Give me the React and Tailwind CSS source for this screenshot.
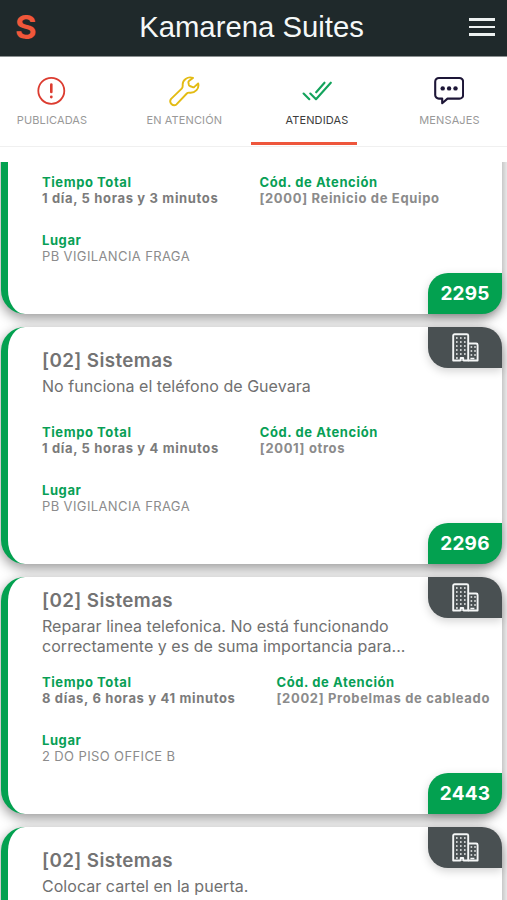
import React, { useState } from 'react';

const tabs = [
  { id: 'publicadas', label: 'PUBLICADAS', icon: AlertIcon },
  { id: 'atencion', label: 'EN ATENCIÓN', icon: WrenchIcon },
  { id: 'atendidas', label: 'ATENDIDAS', icon: DoubleCheckIcon },
  { id: 'mensajes', label: 'MENSAJES', icon: MessageIcon },
];

const tickets = [
  {
    id: 2295,
    time: '1 día, 5 horas y 3 minutos',
    code: '[2000] Reinicio de Equipo',
    place: 'PB VIGILANCIA FRAGA',
  },
  {
    id: 2296,
    title: '[02] Sistemas',
    description: 'No funciona el teléfono de Guevara',
    time: '1 día, 5 horas y 4 minutos',
    code: '[2001] otros',
    place: 'PB VIGILANCIA FRAGA',
  },
  {
    id: 2443,
    title: '[02] Sistemas',
    description: 'Reparar linea telefonica. No está funcionando correctamente y es de suma importancia para...',
    time: '8 días, 6 horas y 41 minutos',
    code: '[2002] Probelmas de cableado',
    place: '2 DO PISO OFFICE B',
  },
  {
    title: '[02] Sistemas',
    description: 'Colocar cartel en la puerta.',
  },
];

function AlertIcon() {
  return (
    <svg width="30" height="30" viewBox="0 0 30 30" fill="none" stroke="#dc3c30" strokeWidth="1.8">
      <circle cx="14.3" cy="14.8" r="13" />
      <path d="M14.3 8.6v7.4" strokeWidth="2.6" strokeLinecap="round" />
      <circle cx="14.3" cy="21" r="1.4" fill="#dc3c30" stroke="none" />
    </svg>
  );
}

function WrenchIcon() {
  return (
    <svg width="31" height="31" viewBox="0 0 31 31" className="-mb-px" fill="none" stroke="#e3bb13" strokeWidth="1.9" strokeLinecap="round" strokeLinejoin="round">
      <path d="M24 1.9C18.5 0 13.2 4 13.7 9.4C13.8 11 13.6 11.8 12.7 12.7L2.1 22.9A3.9 3.9 0 0 0 7.5 28.4L17.8 17.5C18.6 16.7 19.4 16.5 20.7 16.7C26.4 17.2 30.4 12.6 29.2 7.5L25.3 10.9A1.6 1.6 0 0 1 23.7 11.1L20.8 10A1.6 1.6 0 0 1 19.9 9L19.4 6.5Q19.3 5.700 19.9 5.1Z" />
    </svg>
  );
}

function DoubleCheckIcon() {
  return (
    <svg width="30" height="30" viewBox="0 0 30 30" fill="none" stroke="#13a35c" strokeWidth="2.1" strokeLinecap="round" strokeLinejoin="round">
      <path d="M1.6 17.500l5.700 5.700M8.300 17.500l5.700 5.700L28.800 6.700M14.200 16.300L22.500 6.700" />
    </svg>
  );
}

function MessageIcon() {
  return (
    <svg width="30" height="30" viewBox="0 0 30 30" fill="none" stroke="#1d1637" strokeWidth="2.1" strokeLinejoin="round">
      <path d="M4.9 2h20.500a3.700 3.700 0 0 1 3.700 3.700v13.200a3.700 3.700 0 0 1-3.700 3.700H13.500L8.200 27.200v-4.600H4.900A3.700 3.700 0 0 1 1.200 18.900V5.700A3.700 3.700 0 0 1 4.900 2z" />
      <g fill="#1d1637" stroke="none">
        <circle cx="8.700" cy="12.400" r="2.200" />
        <circle cx="15.100" cy="12.400" r="2.200" />
        <circle cx="21.500" cy="12.400" r="2.200" />
      </g>
    </svg>
  );
}

function BuildingIcon() {
  return (
    <svg width="27" height="29" viewBox="0 0 27 29" fill="none" stroke="#f4f6f6" strokeWidth="1.9" strokeLinejoin="round">
      <path d="M8.700 27.500H1.200V2.600a1.400 1.400 0 0 1 1.400-1.400h12.200a1.400 1.400 0 0 1 1.400 1.400v24.900h-5" />
      <path d="M16.200 10.500h8a1.400 1.400 0 0 1 1.400 1.400v15.600h-9.400M8.700 28v-3h2.500v3" />
      <path d="M4 5h11M4 9h11M4 13h11M4 17h11M4 21h11" strokeWidth="1.6" strokeDasharray="1.6 2.4" />
      <path d="M18.600 14h6M18.600 18h6M18.600 22h6" strokeWidth="1.6" strokeDasharray="1.6 2" />
      <path d="M4 25h1.800M18.400 25.500h4" strokeWidth="1.5" />
    </svg>
  );
}

function Header() {
  return (
    <header className="flex h-[57px] shrink-0 items-center justify-between border-b border-[#8b9091] bg-[#1f292b] pr-3 pb-0.5 pl-[15px]">
      <span className="w-[19px] font-['Inter'] text-[33px] leading-none font-bold text-[#f0573a]">S</span>
      <h1 className="font-['Liberation_Sans'] text-[29.3px] leading-none text-[#f5f8f8]">Kamarena Suites</h1>
      <button className="flex w-[26px] flex-col gap-[5px]" title="Menú">
        <span className="h-[2.5px] bg-[#edf1f1]" />
        <span className="h-[2.5px] bg-[#edf1f1]" />
        <span className="h-[2.5px] bg-[#edf1f1]" />
      </button>
    </header>
  );
}

function Field({ label, value, variant }) {
  return (
    <div className="whitespace-nowrap">
      <p className="text-[13px] leading-4 font-bold tracking-[0.58px] text-[#089f56]">{label}</p>
      {variant === 'light' && <p className="text-[13px] leading-4 tracking-[0.38px] text-[#8c8c8c]">{value}</p>}
      {variant === 'code' && <p className="text-[13px] leading-4 font-bold tracking-[0.66px] text-[#8b8b8b]">{value}</p>}
      {!variant && <p className="text-[13px] leading-4 font-bold tracking-[0.66px] text-[#7b7b7b]">{value}</p>}
    </div>
  );
}

function TicketCard({ ticket }) {
  return (
    <article className="relative h-[237px] w-[501px] shrink-0 rounded-[24px] border-l-[7px] border-[#03a150] bg-white pt-3 pl-[34px] shadow-[0_4px_12px_1px_rgba(0,0,0,0.38)]">
      <div className="flex h-[68px] w-[390px] flex-col justify-center">
        {ticket.title && (
          <>
            <h2 className="-mt-0.5 mb-1 text-[18.8px] leading-[25px] font-semibold tracking-[0.4px] text-[#737373]">{ticket.title}</h2>
            <p className="text-[16px] leading-[19.5px] tracking-[0.04px] text-[#707070]">{ticket.description}</p>
          </>
        )}
      </div>
      {ticket.time && (
        <>
          <div className="mt-[17px] flex gap-[41px]">
            <Field label="Tiempo Total" value={ticket.time} />
            <Field label="Cód. de Atención" value={ticket.code} variant="code" />
          </div>
          <div className="mt-[26px]">
            <Field label="Lugar" value={ticket.place} variant="light" />
          </div>
        </>
      )}
      <div className="absolute top-0 right-0 flex h-[41px] w-[74px] items-center justify-center rounded-tr-[20px] rounded-bl-[20px] bg-[#495052] shadow-[0_3px_10px_rgba(0,0,0,0.18)]">
        <BuildingIcon />
      </div>
      {ticket.id && (
        <div className="absolute right-0 bottom-0 flex h-[41px] w-[74px] items-center justify-center rounded-tl-[20px] rounded-br-[20px] bg-[#03a150] pt-0.5 text-[19px] font-bold tracking-[0.2px] text-white shadow-[0_3px_10px_rgba(0,0,0,0.18)]">
          {ticket.id}
        </div>
      )}
    </article>
  );
}

export default function App() {
  const [active, setActive] = useState('atendidas');

  return (
    <div className="flex h-[900px] w-[507px] flex-col overflow-hidden bg-white font-['Inter',sans-serif]">
      <Header />

      <nav className="flex h-[90px] shrink-0 border-b border-[#f0f0f0]">
        {tabs.map(({ id, label, icon: Icon }) => (
          <button
            key={id}
            onClick={() => setActive(id)}
            className="flex w-[132.6px] shrink-0 flex-col items-center pt-[19px] first:w-[118px] first:pr-[14px]"
          >
            <Icon />
            <span className={active === id ? 'mt-[6px] text-[11px] leading-4 tracking-[0.12px] text-[#3c3c3c]' : 'mt-[6px] text-[11px] leading-4 tracking-[0.12px] text-[#999]'}>
              {label}
            </span>
            {active === id && <span className="mt-[14px] mr-[26px] h-[3px] w-[106px] bg-[#ee563c]" />}
          </button>
        ))}
      </nav>

      <main className="mt-[15px] flex min-h-0 flex-1 flex-col justify-end overflow-hidden">
        <div className="-mb-[164px] flex shrink-0 flex-col gap-[13px] pl-px">
          {tickets.map((ticket, i) => (
            <TicketCard key={i} ticket={ticket} />
          ))}
        </div>
      </main>
    </div>
  );
}
